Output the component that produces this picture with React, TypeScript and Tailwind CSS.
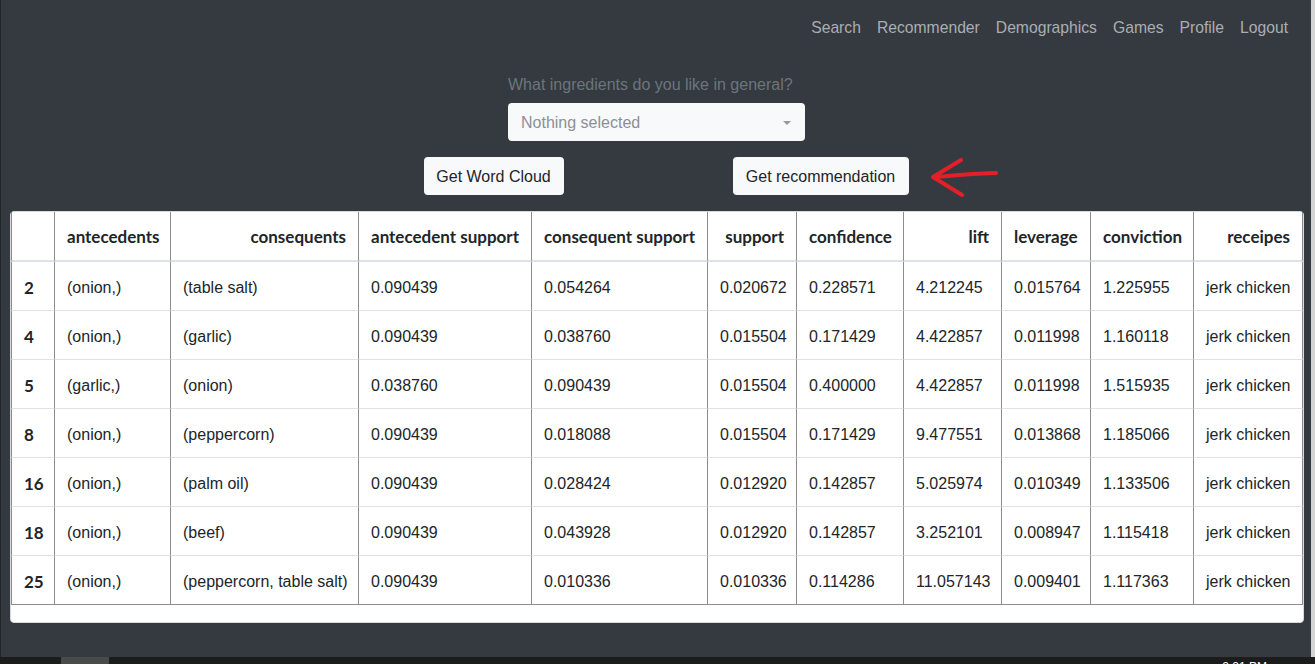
import React from "react";

const columns = [
  { label: "", w: "w-[44px]", align: "text-left" },
  { label: "antecedents", w: "w-[116px]", align: "text-left" },
  { label: "consequents", w: "w-[188px]", align: "text-right" },
  { label: "antecedent support", w: "w-[173px]", align: "text-left" },
  { label: "consequent support", w: "w-[176px]", align: "text-left" },
  { label: "support", w: "w-[89px]", align: "text-right" },
  { label: "confidence", w: "w-[107px]", align: "text-left" },
  { label: "lift", w: "w-[98px]", align: "text-right" },
  { label: "leverage", w: "w-[89px]", align: "text-left" },
  { label: "conviction", w: "w-[103px]", align: "text-left" },
  { label: "receipes", w: "w-[109px]", align: "text-right" },
];

const rows = [
  ["2", "(onion,)", "(table salt)", "0.090439", "0.054264", "0.020672", "0.228571", "4.212245", "0.015764", "1.225955", "jerk chicken"],
  ["4", "(onion,)", "(garlic)", "0.090439", "0.038760", "0.015504", "0.171429", "4.422857", "0.011998", "1.160118", "jerk chicken"],
  ["5", "(garlic,)", "(onion)", "0.038760", "0.090439", "0.015504", "0.400000", "4.422857", "0.011998", "1.515935", "jerk chicken"],
  ["8", "(onion,)", "(peppercorn)", "0.090439", "0.018088", "0.015504", "0.171429", "9.477551", "0.013868", "1.185066", "jerk chicken"],
  ["16", "(onion,)", "(palm oil)", "0.090439", "0.028424", "0.012920", "0.142857", "5.025974", "0.010349", "1.133506", "jerk chicken"],
  ["18", "(onion,)", "(beef)", "0.090439", "0.043928", "0.012920", "0.142857", "3.252101", "0.008947", "1.115418", "jerk chicken"],
  ["25", "(onion,)", "(peppercorn, table salt)", "0.090439", "0.010336", "0.010336", "0.114286", "11.057143", "0.009401", "1.117363", "jerk chicken"],
];

const navLinks = ["Search", "Recommender", "Demographics", "Games", "Profile", "Logout"];

function RedArrow() {
  return (
    <svg className="absolute left-[197px] top-[1px] h-[40px] w-[70px]" viewBox="0 0 70 40" fill="none">
      <path d="M66 15 C50 15 30 17 4 19" stroke="#e3202a" strokeWidth={4} strokeLinecap="round" />
      <path d="M31 2 L3 19 L32 37" stroke="#e3202a" strokeWidth={4} strokeLinecap="round" strokeLinejoin="round" />
    </svg>
  );
}

export default function App() {
  return (
    <div className="flex h-[664px] w-[1315px] flex-col overflow-hidden font-['Liberation_Sans',Arial,sans-serif] text-[16px]">
      <div className="flex min-h-0 flex-1">
        <div className="flex w-[1311px] flex-col border-l border-[#22262a] bg-[#343a40]">
          {/* Navbar */}
          <nav className="flex h-[56px] items-center justify-end pr-[15px] text-[15.7px]">
            {navLinks.map((l) => (
              <a key={l} className="whitespace-nowrap px-2 leading-6 text-[#aaaeb2]">
                {l}
              </a>
            ))}
          </nav>

          {/* Form */}
          <div className="mt-[17px] flex flex-col items-center">
            <div className="pl-[1px] leading-6 text-[#6c757d]">
              <label className="block w-[297px] whitespace-nowrap">What ingredients do you like in general?</label>
              <div className="mt-[6px] flex h-[38px] w-[297px] items-center justify-between rounded bg-[#f8f9fa] pl-[13px] pr-[14px] pt-[1px] text-[#8a9096]">
                <span>Nothing selected</span>
                <span className="h-0 w-0 border-x-[4px] border-t-[4px] border-x-transparent border-t-[#999]" />
              </div>
            </div>
          </div>

          <div className="mt-[16px] flex justify-center gap-[169px] pl-[20px]">
            <button className="h-[38px] w-[140px] whitespace-nowrap rounded bg-[#f8f9fa] pt-[1px] text-[#212529]">Get Word Cloud</button>
            <div className="relative">
              <button className="h-[38px] w-[176px] whitespace-nowrap rounded bg-[#f8f9fa] pt-[1px] text-[#212529]">Get recommendation</button>
              <RedArrow />
            </div>
          </div>

          {/* Results table */}
          <div className="mx-[9px] mt-[16px] h-[412px] w-[1294px] shrink-0 rounded border border-[#d6d8db] bg-white">
            <table className="w-[1292px] table-fixed border-separate border-spacing-0 text-[#212529]">
              <thead>
                <tr>
                  {columns.map((c, i) => (
                    <th
                      key={i}
                      className={`${c.w} ${c.align} h-[50px] whitespace-nowrap border-r border-b-2 border-r-[#8c8c8c] border-b-[#dee2e6] px-3 pt-[13px] pb-[11px] font-['Lato',sans-serif] text-[17px] font-bold leading-6 ${i === 0 ? "border-l border-l-[#8c8c8c]" : ""}`}
                    >
                      {c.label}
                    </th>
                  ))}
                </tr>
              </thead>
              <tbody>
                {rows.map((r, ri) => (
                  <tr key={ri}>
                    {r.map((v, ci) => (
                      <td
                        key={ci}
                        className={`h-[49px] whitespace-nowrap border-r border-b border-r-[#8c8c8c] px-3 pt-[14px] pb-[10px] text-left leading-6 ${
                          ri === rows.length - 1 ? "border-b-[#8c8c8c]" : "border-b-[#dee2e6]"
                        } ${ci === 0 ? "border-l border-l-[#8c8c8c] font-['Lato',sans-serif] text-[17px] font-bold" : ""}`}
                      >
                        {v}
                      </td>
                    ))}
                  </tr>
                ))}
              </tbody>
            </table>
          </div>
        </div>
        <div className="w-[4px] bg-[#d4d4d4]" />
      </div>

      {/* Taskbar edge */}
      <div className="flex h-[7px] shrink-0 items-start overflow-hidden bg-[#1c1c1c]">
        <div className="ml-[61px] h-[7px] w-[48px] bg-[#4a4a4a]" />
        <div className="ml-auto mr-[48px] mt-[2px] text-[12px] leading-4 text-white">2:21 PM</div>
      </div>
    </div>
  );
}
